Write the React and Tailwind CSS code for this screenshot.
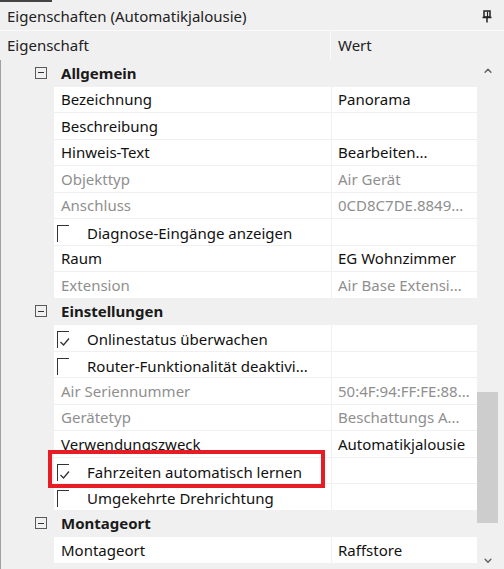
import { ChevronUp, ChevronDown } from "lucide-react";

const rows = [
  { cat: "Allgemein" },
  { name: "Bezeichnung", value: "Panorama" },
  { name: "Beschreibung", value: "" },
  { name: "Hinweis-Text", value: "Bearbeiten..." },
  { name: "Objekttyp", value: "Air Gerät", dim: true },
  { name: "Anschluss", value: "0CD8C7DE.8849...", dim: true },
  { name: "Diagnose-Eingänge anzeigen", check: false },
  { name: "Raum", value: "EG Wohnzimmer" },
  { name: "Extension", value: "Air Base Extensi...", dim: true },
  { cat: "Einstellungen" },
  { name: "Onlinestatus überwachen", check: true },
  { name: "Router-Funktionalität deaktivi...", check: false },
  { name: "Air Seriennummer", value: "50:4F:94:FF:FE:88...", dim: true },
  { name: "Gerätetyp", value: "Beschattungs A...", dim: true },
  { name: "Verwendungszweck", value: "Automatikjalousie" },
  { name: "Fahrzeiten automatisch lernen", check: true, marked: true },
  { name: "Umgekehrte Drehrichtung", check: false },
  { cat: "Montageort" },
  { name: "Montageort", value: "Raffstore" },
];

function CheckBox({ checked }) {
  return (
    <span className="relative w-[12px] h-[17px] border-t border-l border-[#333] mt-[2px] shrink-0">
      {checked && (
        <svg width="12" height="10" viewBox="0 0 12 10" className="absolute left-[1px] top-[5px]">
          <path d="M1.5 5 L4.5 8 L10 1.5" fill="none" stroke="#333" strokeWidth="1.3" />
        </svg>
      )}
    </span>
  );
}

function Row({ r }) {
  if (r.cat) {
    return (
      <div className="flex items-center h-[26.5px] bg-[#f0f0f0] border-b border-[#f0f0f0]">
        <div className="w-[53px] flex justify-end pr-[7px]">
          <span className="w-[12px] h-[12px] border border-[#5a5a5a] flex items-center justify-center">
            <span className="w-[6px] h-px bg-[#333]" />
          </span>
        </div>
        <span className="pl-[7px] font-bold text-[#1a1a1a]">{r.cat}</span>
      </div>
    );
  }
  const tone = r.dim ? "text-[#8f8f8f]" : "text-[#111]";
  return (
    <div className="flex h-[26.5px]">
      <div className="w-[53px] bg-[#f0f0f0]" />
      <div className={`relative w-[278px] bg-white border-b border-r border-[#f0f0f0] flex items-center ${tone}`}>
        {r.check !== undefined ? (
          <div className="flex items-start gap-[18px] pl-[3px] h-full pt-[4px]">
            <CheckBox checked={r.check} />
            <span className="leading-[20px]">{r.name}</span>
          </div>
        ) : (
          <span className="pl-[7px]">{r.name}</span>
        )}
        {r.marked && (
          <div className="absolute z-10 left-[-6px] top-[-8px] w-[277px] h-[38px] border-[4px] border-[#e61d25]" />
        )}
      </div>
      <div className={`flex-1 bg-white border-b border-[#f0f0f0] flex items-center pl-[6px] ${tone}`}>
        {r.value}
      </div>
    </div>
  );
}

export default function App() {
  return (
    <div className="w-[504px] h-[569px] bg-[#f0f0f0] overflow-hidden text-[15px] flex flex-col" style={{ fontFamily: "'Noto Sans', sans-serif" }}>
      <div className="h-[2px] w-[52px] bg-[#444]" />
      <div className="h-[28px] flex items-center justify-between pl-[7px] pr-[12px] text-[#222]">
        <span>Eigenschaften (Automatikjalousie)</span>
        <svg width="10" height="13" viewBox="0 0 10 13">
          <path d="M2 1 H8 V7 H2 Z" fill="none" stroke="#222" strokeWidth="1.5" />
          <path d="M0.5 7.5 H9.5" stroke="#222" strokeWidth="1.5" />
          <path d="M5 8 V12.5" stroke="#222" strokeWidth="1.5" />
          <path d="M5.5 1.5 V7" stroke="#222" strokeWidth="1.2" />
        </svg>
      </div>
      <div className="h-[30px] flex border-t border-[#fafafa] text-[#222]">
        <div className="w-[331px] flex items-center pl-[7px] border-r border-[#fafafa]">Eigenschaft</div>
        <div className="flex-1 flex items-center pl-[7px]">Wert</div>
      </div>
      <div className="flex flex-1 min-h-0">
        <div className="w-[477px] border-l border-[#a0a0a0] overflow-hidden">
          {rows.map((r, i) => (
            <Row key={i} r={r} />
          ))}
        </div>
        <div className="flex-1 flex flex-col items-center pr-[6px]">
          <ChevronUp className="w-[14px] h-[14px] mt-[5px] text-[#606060]" strokeWidth={3} />
          <div className="flex-1 w-full flex flex-col pt-[315px] pb-[32px]">
            <div className="h-[131px] w-full bg-[#cdcdcd]" />
          </div>
          <ChevronDown className="w-[14px] h-[14px] mb-[3px] text-[#606060]" strokeWidth={3} />
        </div>
      </div>
    </div>
  );
}
